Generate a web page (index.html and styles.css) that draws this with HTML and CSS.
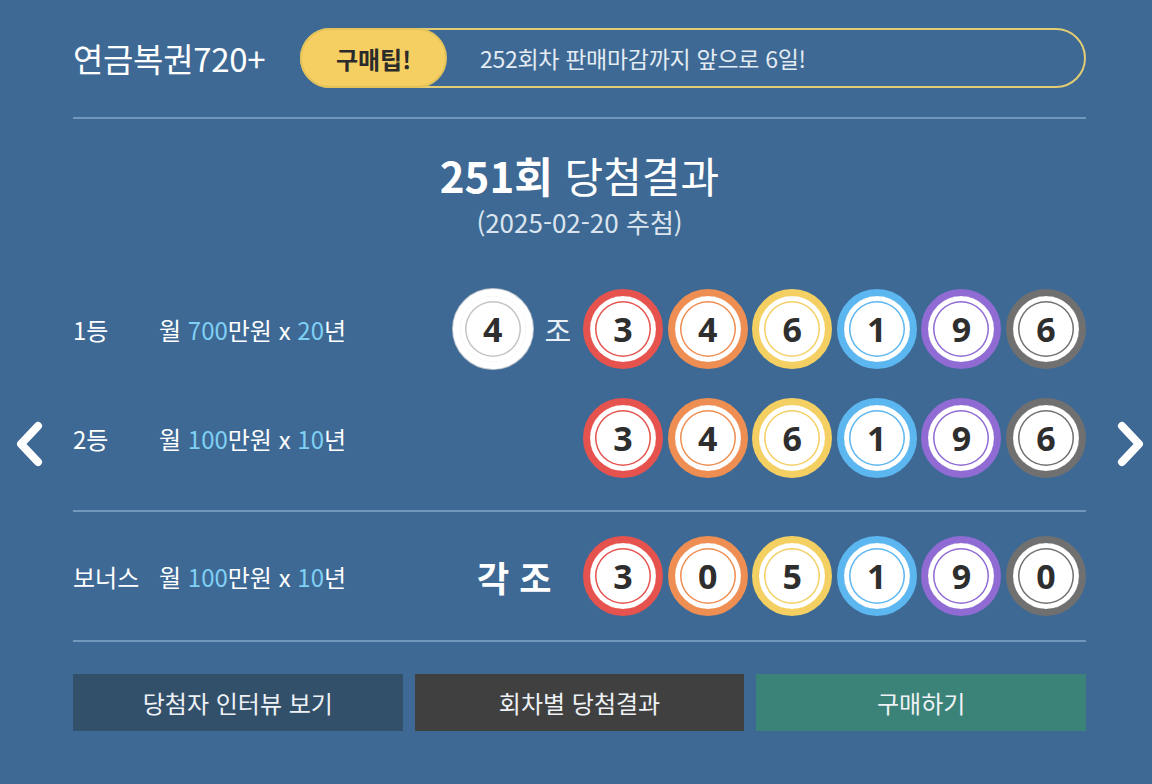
FILE: index.html
```html
<!DOCTYPE html>
<html lang="ko">
<head>
<meta charset="utf-8">
<title>연금복권720+ 당첨결과</title>
<link rel="stylesheet" href="styles.css">
</head>
<body>
<div class="page">
  <main class="panel">
    <header class="head">
      <h1 class="brand">연금복권720+</h1>
      <div class="tip">
        <span class="tip-badge">구매팁!</span>
        <span class="tip-text">252회차 판매마감까지 앞으로 6일!</span>
      </div>
    </header>
    <hr class="rule rule-top">

    <section class="result">
      <h2 class="result-title"><b>251회</b> 당첨결과</h2>
      <p class="result-date">(2025-02-20 추첨)</p>

      <div class="prize prize-first">
        <span class="rank">1등</span>
        <span class="amount">월 <em>700</em>만원 x <em>20</em>년</span>
        <div class="balls">
          <span class="ball ball-group">4</span>
          <span class="jo">조</span>
          <span class="ball c-red">3</span>
          <span class="ball c-orange">4</span>
          <span class="ball c-yellow">6</span>
          <span class="ball c-blue">1</span>
          <span class="ball c-purple">9</span>
          <span class="ball c-gray">6</span>
        </div>
      </div>

      <div class="prize prize-second">
        <span class="rank">2등</span>
        <span class="amount">월 <em>100</em>만원 x <em>10</em>년</span>
        <div class="balls">
          <span class="ball c-red">3</span>
          <span class="ball c-orange">4</span>
          <span class="ball c-yellow">6</span>
          <span class="ball c-blue">1</span>
          <span class="ball c-purple">9</span>
          <span class="ball c-gray">6</span>
        </div>
      </div>

      <hr class="rule rule-mid">

      <div class="prize prize-bonus">
        <span class="rank">보너스</span>
        <span class="amount">월 <em>100</em>만원 x <em>10</em>년</span>
        <div class="balls">
          <span class="each">각조</span>
          <span class="ball c-red">3</span>
          <span class="ball c-orange">0</span>
          <span class="ball c-yellow">5</span>
          <span class="ball c-blue">1</span>
          <span class="ball c-purple">9</span>
          <span class="ball c-gray">0</span>
        </div>
      </div>

      <hr class="rule rule-bottom">
    </section>

    <nav class="actions">
      <a class="btn btn-interview" href="#">당첨자 인터뷰 보기</a>
      <a class="btn btn-history" href="#">회차별 당첨결과</a>
      <a class="btn btn-buy" href="#">구매하기</a>
    </nav>
  </main>

  <a class="arrow arrow-prev" href="#" aria-label="이전 회차">
    <svg width="40" height="60" viewBox="0 0 40 60"><path d="M28 12 L11 30 L28 48" fill="none" stroke="#fff" stroke-width="8" stroke-linecap="round" stroke-linejoin="round"/></svg>
  </a>
  <a class="arrow arrow-next" href="#" aria-label="다음 회차">
    <svg width="40" height="60" viewBox="0 0 40 60"><path d="M12 12 L29 30 L12 48" fill="none" stroke="#fff" stroke-width="8" stroke-linecap="round" stroke-linejoin="round"/></svg>
  </a>
</div>
</body>
</html>
```

FILE: styles.css
```css
html, body {
  margin: 0;
  padding: 0;
}

body {
  background: #3d6994;
  color: #fff;
  font-family: "Noto Sans CJK KR", "Noto Sans", sans-serif;
  width: 1152px;
  height: 784px;
  overflow: hidden;
}

.page {
  position: relative;
  width: 1152px;
  height: 784px;
}

.panel {
  width: 1013px;
  margin-left: 73px;
  padding-top: 28px;
}

/* header: brand + tip bar */
.head {
  display: flex;
  align-items: center;
  height: 60px;
}

.brand {
  margin: 0;
  width: 227px;
  font-size: 33px;
  font-weight: 400;
  letter-spacing: -0.3px;
  line-height: 60px;
  white-space: nowrap;
}

.tip {
  flex: 1;
  display: flex;
  align-items: center;
  height: 60px;
  box-sizing: border-box;
  border: 2px solid #e3cd74;
  border-radius: 30px;
}

.tip-badge {
  width: 147px;
  height: 60px;
  margin: -2px 0 -2px -2px;
  box-sizing: border-box;
  border: 2px solid #e3c35a;
  border-radius: 30px;
  background: #f5cf62;
  color: #2b2b2b;
  font-size: 24px;
  font-weight: 700;
  display: flex;
  align-items: center;
  justify-content: center;
}

.tip-text {
  margin-left: 33px;
  font-size: 23px;
  letter-spacing: -0.3px;
  color: #e3ebf3;
}

.rule {
  border: 0;
  margin: 0;
  height: 2px;
  background: #7197bd;
}

.rule-top { margin-top: 29px; }
.rule-mid { margin-top: 32px; }
.rule-bottom { margin-top: 24px; }

/* draw result */
.result-title {
  margin: 31px 0 0;
  text-align: center;
  font-size: 42px;
  font-weight: 400;
  line-height: 50px;
}

.result-title b {
  font-weight: 700;
}

.result-date {
  margin: 7px 0 0;
  text-align: center;
  font-size: 26px;
  line-height: 30px;
  color: #dbe5ef;
}

.prize {
  display: flex;
  align-items: center;
  height: 80px;
  font-size: 24px;
}

.prize-first { margin-top: 52px; }
.prize-second { margin-top: 29px; }
.prize-bonus { margin-top: 24px; }

.rank {
  width: 86px;
}

.amount em {
  font-style: normal;
  color: #7fd0f4;
}

.balls {
  margin-left: auto;
  display: flex;
  align-items: center;
  gap: 4.6px;
}

.ball {
  width: 80px;
  height: 80px;
  box-sizing: border-box;
  border-radius: 50%;
  border: 7px solid var(--ring);
  background: #fff;
  box-shadow: inset 0 0 0 5px #fff, inset 0 0 0 6.5px var(--ring);
  display: flex;
  align-items: center;
  justify-content: center;
  color: #2e2e2e;
  font-family: "Noto Sans", sans-serif;
  font-size: 34px;
  font-weight: 700;
}

.c-red { --ring: #e6534e; }
.c-orange { --ring: #ee8e52; }
.c-yellow { --ring: #f4cf62; }
.c-blue { --ring: #5cb6ef; }
.c-purple { --ring: #8f6bd3; }
.c-gray { --ring: #707070; }

.ball-group {
  --ring: #fff;
  box-shadow: 0 0 0 1px #b9c2cc, inset 0 0 0 5px #fff, inset 0 0 0 6.5px #c4c4c4;
}

.jo {
  width: 41px;
  text-align: center;
  font-size: 29px;
  color: #e8eff6;
}

.each {
  margin-right: 17px;
  font-size: 35px;
  font-weight: 700;
  letter-spacing: 10px;
}

/* action buttons */
.actions {
  margin-top: 32px;
  display: grid;
  grid-template-columns: repeat(3, 1fr);
  gap: 12px;
}

.btn {
  height: 57px;
  display: flex;
  align-items: center;
  justify-content: center;
  color: #eef2f6;
  text-decoration: none;
  font-size: 24px;
}

.btn-interview { background: #33506b; }
.btn-history { background: #404040; }
.btn-buy { background: #3b8379; }

/* carousel arrows over the page edges */
.arrow {
  position: absolute;
  top: 414px;
  display: block;
  width: 40px;
  height: 60px;
}

.arrow svg { display: block; }

.arrow-prev { left: 10px; }
.arrow-next { left: 1110px; }
```
